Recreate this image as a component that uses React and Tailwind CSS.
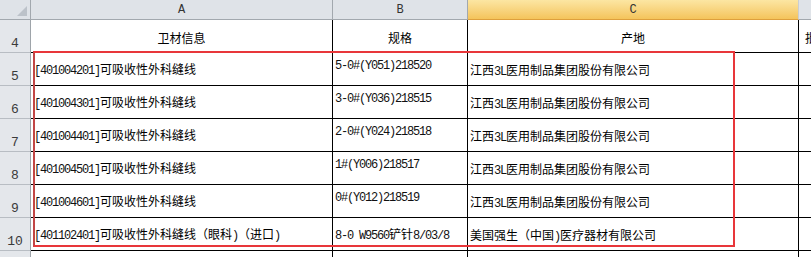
const rows = [
  {
    n: 5,
    a: "[401004201]可吸收性外科缝线",
    b: "5-0#(Y051)218520",
    c: "江西3L医用制品集团股份有限公司",
  },
  {
    n: 6,
    a: "[401004301]可吸收性外科缝线",
    b: "3-0#(Y036)218515",
    c: "江西3L医用制品集团股份有限公司",
  },
  {
    n: 7,
    a: "[401004401]可吸收性外科缝线",
    b: "2-0#(Y024)218518",
    c: "江西3L医用制品集团股份有限公司",
  },
  {
    n: 8,
    a: "[401004501]可吸收性外科缝线",
    b: "1#(Y006)218517",
    c: "江西3L医用制品集团股份有限公司",
  },
  {
    n: 9,
    a: "[401004601]可吸收性外科缝线",
    b: "0#(Y012)218519",
    c: "江西3L医用制品集团股份有限公司",
  },
  {
    n: 10,
    a: "[401102401]可吸收性外科缝线（眼科)（进口)",
    b: "8-0 W9560铲针8/03/8",
    c: "美国强生（中国)医疗器材有限公司",
    bMiddle: true,
  },
];

// ASCII runs get a narrow mono face, the rest stays in the CJK face
function Txt({ text }) {
  const parts = text.split(/([\x20-\x7E]+)/).filter(Boolean);
  return (
    <span className="whitespace-pre">
      {parts.map((p, i) =>
        /^[\x20-\x7E]+$/.test(p) ? (
          <span key={i} className="font-['Liberation_Mono',monospace] text-[12px] tracking-[-1.2px] text-[#111]">
            {p}
          </span>
        ) : (
          <span key={i}>{p}</span>
        )
      )}
    </span>
  );
}

const grid = "grid grid-cols-[31px_302px_135px_331px_1fr]";

function RowHead({ n, h }) {
  return (
    <div
      className={`${h} flex items-end justify-center pb-[2px] bg-[#e4e7eb] border-r border-b border-r-[#9ea4aa] border-b-[#b8bdc3] font-['Liberation_Mono',monospace] text-[13px] leading-none text-[#3a3a3a]`}
    >
      {n}
    </div>
  );
}

export default function App() {
  return (
    <div className="relative w-[811px] h-[257px] overflow-hidden bg-white text-black font-['Noto_Sans_CJK_SC',sans-serif] text-[12px]">
      {/* column headers */}
      <div className={`${grid} h-[20px]`}>
        <div className="relative bg-[#dfe3e8] border-r border-b border-[#a2a8ae]">
          <svg className="absolute right-[3px] bottom-[3px]" width="10" height="10" viewBox="0 0 10 10">
            <path d="M10 0 L10 10 L0 10 Z" fill="#bcc2c9" />
          </svg>
        </div>
        <div className="flex items-center justify-center bg-[#dfe3e8] border-r border-b border-[#a2a8ae] font-['Liberation_Mono',monospace] text-[12px] text-[#333]">
          A
        </div>
        <div className="flex items-center justify-center bg-[#dfe3e8] border-r border-b border-[#a2a8ae] font-['Liberation_Mono',monospace] text-[12px] text-[#333]">
          B
        </div>
        <div className="flex items-center justify-center bg-gradient-to-b from-[#fce6a2] to-[#f4c45a] border-r border-b border-r-[#c9cdd2] border-b-[#dea03c] font-['Liberation_Mono',monospace] text-[12px] text-[#333]">
          C
        </div>
        <div className="bg-[#dfe3e8] border-b border-[#a2a8ae]" />
      </div>

      {/* row 4: titles */}
      <div className={`${grid} h-[33px]`}>
        <RowHead n={4} h="h-[33px]" />
        <div className="flex items-center justify-center pt-[4px] border-r border-b border-black">卫材信息</div>
        <div className="flex items-center justify-center pt-[4px] border-r border-b border-black">规格</div>
        <div className="flex items-center justify-center pt-[4px] border-r border-b border-black">产地</div>
        <div className="flex items-center pl-[6px] pt-[4px] border-b border-black whitespace-nowrap overflow-hidden">批号</div>
      </div>

      {rows.map((r) => (
        <div key={r.n} className={`${grid} h-[33px]`}>
          <RowHead n={r.n} h="h-[33px]" />
          <div className="flex items-center pl-[3px] pt-[2px] border-r border-b border-black whitespace-nowrap overflow-hidden">
            <Txt text={r.a} />
          </div>
          <div
            className={`flex pl-[2px] border-r border-b border-black whitespace-nowrap overflow-hidden ${
              r.bMiddle ? "items-center pt-[2px]" : "items-start pt-[2px]"
            }`}
          >
            <Txt text={r.b} />
          </div>
          <div className="flex items-center pl-[2px] pt-[4px] border-r border-b border-black whitespace-nowrap overflow-hidden">
            <Txt text={r.c} />
          </div>
          <div className="border-b border-black" />
        </div>
      ))}

      {/* row 11, mostly cut off */}
      <div className={`${grid} h-[10px]`}>
        <div className="bg-[#e4e7eb] border-r border-[#9ea4aa]" />
        <div className="border-r border-black" />
        <div className="border-r border-black" />
        <div className="border-r border-black" />
        <div />
      </div>

      {/* red selection box drawn over the sheet */}
      <div className="absolute left-[33px] top-[51px] w-[702px] h-[196px] border-2 border-[#e8363a] border-l-[#c24646] pointer-events-none" />
    </div>
  );
}
